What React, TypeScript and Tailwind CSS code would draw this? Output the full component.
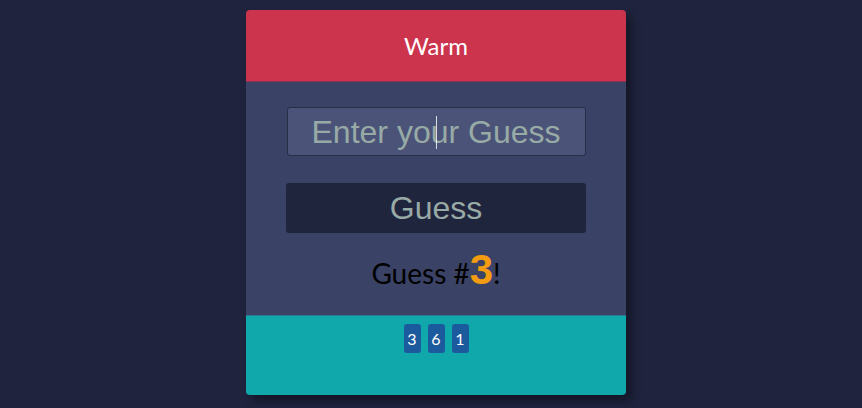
export default function App() {
  return (
    <div className="min-h-[408px] w-full bg-[#1f233d] flex justify-center pt-[10px] pl-[10px] font-['Lato',sans-serif]">
      <div className="w-[380px] h-[385px] rounded-[4px] overflow-hidden flex flex-col shadow-[6px_6px_8px_rgba(0,0,0,0.35)]">
        <div className="h-[72px] bg-[#cc334c] flex items-center justify-center text-white text-[24px] border-b border-[#8a3050]">
          Warm
        </div>
        <div className="h-[233px] bg-[#3a4266] flex flex-col items-center pt-[25px]">
          <div className="w-[299px] h-[49px] bg-[#4b5478] border border-[#282d48] rounded-[3px] flex items-center justify-center text-[32px] text-[#98aaa6] font-['Liberation_Sans',sans-serif] relative">
            Enter your Guess
            <span className="absolute left-[148px] top-[8px] w-[1px] h-[33px] bg-white/80" />
          </div>
          <div className="mt-[27px] w-[300px] h-[50px] bg-[#20253e] rounded-[3px] flex items-center justify-center text-[32px] text-[#98aaa6] font-['Liberation_Sans',sans-serif]">
            Guess
          </div>
          <div className="mt-[16px] flex items-baseline text-[28px] text-black">
            <span>Guess #</span>
            <span className="text-[42px] text-[#f39c12] font-bold font-['Liberation_Sans',sans-serif] leading-none">3</span>
            <span>!</span>
          </div>
        </div>
        <div className="flex-1 bg-[#10a8ab] border-t border-[#2a7a90] flex justify-center gap-[7px] pt-[8px]">
          {["3", "6", "1"].map((d) => (
            <div key={d} className="w-[17px] h-[29px] rounded-[3px] bg-[#1c5a9e] text-white text-[16px] flex items-center justify-center">
              {d}
            </div>
          ))}
        </div>
      </div>
    </div>
  );
}
